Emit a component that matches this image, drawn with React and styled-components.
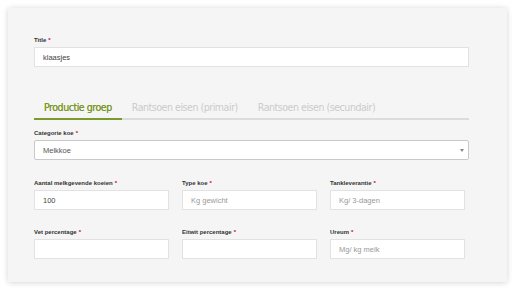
import React from "react";
import styled, { createGlobalStyle } from "styled-components";

const GlobalStyle = createGlobalStyle`
  html, body {
    margin: 0;
    padding: 0;
    background: #ffffff;
  }
  body {
    font-family: "Liberation Sans", Arial, sans-serif;
  }
`;

const Card = styled.section`
  margin: 8px;
  width: 499px;
  height: 274px;
  box-sizing: border-box;
  background-color: #f5f5f5;
  padding: 27px 38px 0 26px;
  box-shadow: 0 0 6px 0 rgba(0, 0, 0, 0.12), 0 2px 6px 0 rgba(0, 0, 0, 0.06);
`;

const Field = styled.div`
  display: flex;
  flex-direction: column;
`;

const Label = styled.label`
  font-size: 6px;
  line-height: 10px;
  font-weight: 700;
  color: #333;
  margin-bottom: 2px;
`;

const Star = styled.span`
  color: #d0021b;
  margin-left: 2px;
`;

const Input = styled.input`
  height: 20px;
  box-sizing: border-box;
  border: 1px solid #e2e2e2;
  background: #fff;
  padding: 0 8px;
  font-family: "Liberation Sans", Arial, sans-serif;
  font-size: 7.5px;
  color: #444;
  outline: none;
  width: 100%;

  &::placeholder {
    color: #999;
  }
`;

const SelectBox = styled.div`
  height: 20px;
  box-sizing: border-box;
  border: 1px solid #c9c9c9;
  border-radius: 2px;
  background: #fff;
  padding: 0 8px;
  display: flex;
  align-items: center;
  justify-content: space-between;
  font-size: 7.5px;
  color: #555;
`;

const Caret = styled.span`
  width: 0;
  height: 0;
  border-left: 2px solid transparent;
  border-right: 2px solid transparent;
  border-top: 3px solid #888;
  margin-right: -4px;
`;

const Tabs = styled.nav`
  display: flex;
  margin-top: 24px;
  border-bottom: 2px solid #dcdcdc;
`;

const Tab = styled.div`
  padding: 9px 10px 4px;
  font-family: "DejaVu Sans Condensed", "Liberation Sans Narrow", sans-serif;
  font-size: 10.5px;
  letter-spacing: -0.45px;
  line-height: 14px;
  color: ${(p) => (p.$active ? "#7b9a2d" : "#cbcbcb")};
  text-shadow: ${(p) => (p.$active ? "0 0 0.3px #7b9a2d" : "none")};
  margin-bottom: -2px;
  border-bottom: 2px solid ${(p) => (p.$active ? "#7b9a2d" : "transparent")};
`;

const Block = styled.div`
  margin-top: ${(p) => p.$top}px;
`;

const Row = styled.div`
  display: grid;
  grid-template-columns: repeat(3, 135px);
  column-gap: 13px;
  margin-top: ${(p) => p.$top}px;
`;

function FormField({ label, value, placeholder }) {
  return (
    <Field>
      <Label>
        {label}
        <Star>*</Star>
      </Label>
      <Input defaultValue={value} placeholder={placeholder} />
    </Field>
  );
}

export default function App() {
  return (
    <>
      <GlobalStyle />
      <Card>
        <FormField label="Title" value="klaasjes" />

        <Tabs>
          <Tab $active>Productie groep</Tab>
          <Tab>Rantsoen eisen (primair)</Tab>
          <Tab>Rantsoen eisen (secundair)</Tab>
        </Tabs>

        <Block $top={8}>
          <Field>
            <Label>
              Categorie koe
              <Star>*</Star>
            </Label>
            <SelectBox>
              <span>Melkkoe</span>
              <Caret />
            </SelectBox>
          </Field>
        </Block>

        <Row $top={18}>
          <FormField label="Aantal melkgevende koeien" value="100" />
          <FormField label="Type koe" placeholder="Kg gewicht" />
          <FormField label="Tankleverantie" placeholder="Kg/ 3-dagen" />
        </Row>

        <Row $top={17}>
          <FormField label="Vet percentage" />
          <FormField label="Eitwit percentage" />
          <FormField label="Ureum" placeholder="Mg/ kg melk" />
        </Row>
      </Card>
    </>
  );
}
